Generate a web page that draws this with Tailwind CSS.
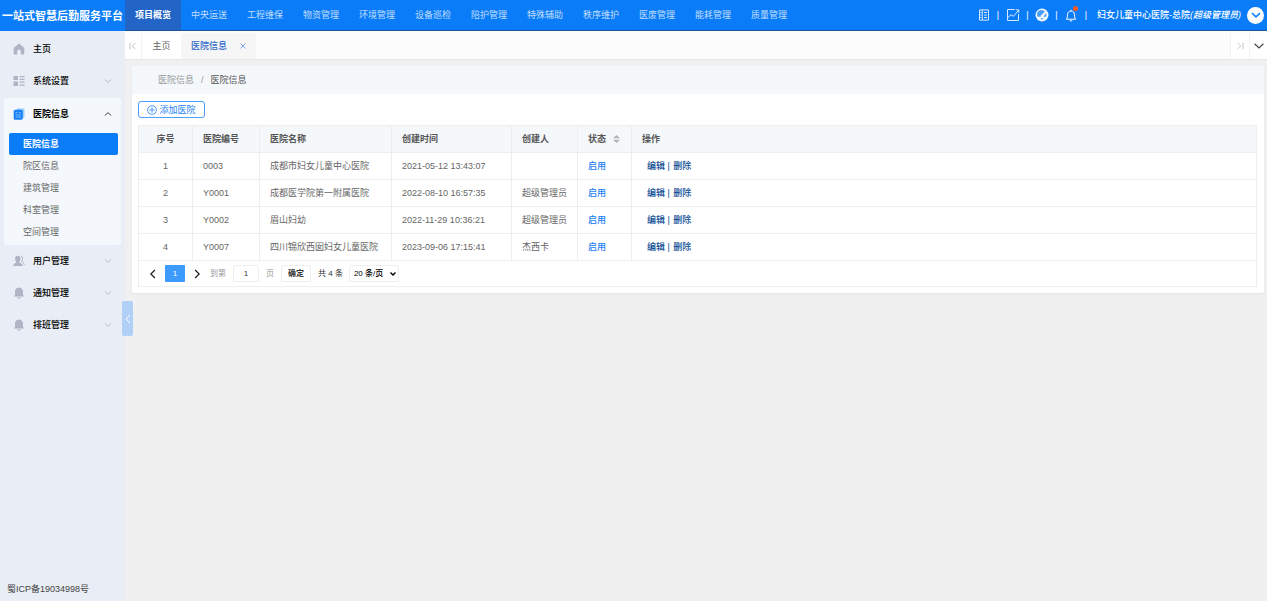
<!DOCTYPE html>
<html lang="zh-CN">

<head>
    <meta charset="UTF-8">
    <meta name="viewport" content="width=device-width, initial-scale=1.0">
    <title>一站式智慧后勤服务平台</title>
    <script src="https://cdn.jsdelivr.net/npm/@tailwindcss/browser@4"></script>
</head>

<body class="min-h-screen flex flex-col bg-[#f0f0f0] text-[9px] leading-4 text-[#666] font-['Liberation_Sans','Noto_Sans_CJK_SC',sans-serif]">
    <!-- top bar -->
    <header class="flex h-[31px] bg-[#0a7cf8] text-white whitespace-nowrap">
        <h1 class="w-[125px] shrink-0 flex items-center justify-center text-[11px] font-bold">一站式智慧后勤服务平台</h1>
        <div class="flex-1 flex justify-between border-b border-[#1d5390]">
            <nav id="nav" class="flex"></nav>
            <div class="flex items-center pr-[3px]">
                <button aria-label="文档">
                    <svg class="w-3 h-3" viewBox="0 0 12 12" fill="none" stroke="#d8eaff">
                        <path d="M1.500 .9h9v10.200h-9zM4.300 1v10M6 3.500h3M6 6h3M6 8.500h3M2.200 3.500h1.200M2.200 6h1.200M2.200 8.500h1.200" />
                    </svg>
                </button>
                <span class="w-4 text-center">|</span>
                <button aria-label="统计">
                    <svg class="w-[14px] h-[14px]" viewBox="0 0 14 14" fill="none" stroke="#d8eaff">
                        <path d="M8.500 1.500h-7v11h11V6M1.500 9.800l3.500-3 2.500 1.500 5-6M9.800 1.800h3v3" />
                    </svg>
                </button>
                <span class="w-[15px] text-center">|</span>
                <button aria-label="仪表盘">
                    <svg class="w-[14px] h-[14px]" viewBox="0 0 14 14">
                        <circle cx="7" cy="7" r="6.500" fill="#f2f8ff" />
                        <path d="M2.800 8.800a4.300 4.300 0 0 1 7-5l-3.300 3.200a1.400 1.400 0 0 0-.8 1.800z" fill="#4a9efa" />
                        <path d="M8.300 8.800 11 5.200q.8 1.800.2 3.600z" fill="#4a9efa" />
                        <path d="M5.800 10.800h2.600" stroke="#4a9efa" />
                    </svg>
                </button>
                <span class="w-[15px] text-center">|</span>
                <button aria-label="消息" class="relative">
                    <svg class="w-[14px] h-[14px]" viewBox="0 0 14 14" fill="none" stroke="#fff">
                        <path d="M7 1.800V3M2.200 11.200h9.600C10.500 10 10.600 8.500 10.500 6.800 10.300 4.300 9 3 7 3S3.700 4.300 3.500 6.800C3.400 8.500 3.500 10 2.200 11.200zM5.700 12.800h2.600" />
                    </svg>
                    <span class="absolute -top-[2px] right-0 w-[5px] h-[5px] rounded-full bg-[#ff5722]"></span>
                </button>
                <span class="w-4 mr-[3px] text-center">|</span>
                <span class="pr-[6px] font-medium">妇女儿童中心医院-总院<i>(超级管理员)</i></span>
                <button aria-label="账号菜单" class="w-[17px] h-[17px] rounded-full bg-white flex items-center justify-center">
                    <svg class="w-[10px] h-[10px]" viewBox="0 0 8 8" fill="none" stroke="#1583f8" stroke-width="1.300">
                        <path d="M.8 2.500 4 5.500l3.200-3" />
                    </svg>
                </button>
            </div>
        </div>
    </header>

    <div class="flex-1 flex">
        <!-- side menu -->
        <aside class="relative w-[125px] shrink-0 flex flex-col bg-[#e9edf5] px-1 pt-[2px] text-black font-medium">
            <a href="#" class="flex items-center h-8 pl-[9px]">
                <svg class="w-3 h-3 mr-2" viewBox="0 0 12 12" fill="#afb3c3">
                    <path d="M6 .5 11.300 5v5.500q0 1-1 1H7.800V8q0-1.500-1.800-1.500T4.200 8v3.500H1.700q-1 0-1-1V5z" />
                </svg>主页
            </a>
            <button class="flex items-center h-8 px-[9px]">
                <svg class="w-3 h-3 mr-2" viewBox="0 0 12 12" fill="#afb3c3">
                    <path d="M.5 1h4.500v4H.5zM.5 6.500h4.500v4.500H.5zM6.500 1h5v1.200h-5zM6.500 3.800h5V5h-5zM6.500 6.500h5v1.200h-5zM6.500 9.500h5v1.200h-5z" />
                </svg>系统设置
                <svg class="w-2 h-2 ml-auto" viewBox="0 0 8 8" fill="none" stroke="#b9bdc8"><path d="M.8 2.500 4 5.300l3.200-2.800" /></svg>
            </button>
            <div class="mt-px rounded-[3px] bg-[#f4f8fc] pb-[2px]">
                <button class="flex items-center w-full h-[31px] px-[9px] font-bold">
                    <svg class="w-3 h-3 mr-2" viewBox="0 0 12 12">
                        <path d="M4 .5h6.500q1 0 1 1v7q0 1.500-1.500 1.500H4z" fill="#9dccfb" />
                        <rect x=".7" y="1.700" width="9" height="10" rx="1.500" fill="#1681f6" />
                        <path d="M2.500 4.500h2M6 4.500h2M2.500 6.800h5.500M2.500 9h5.500" stroke="#7dbafb" />
                    </svg>医院信息
                    <svg class="w-2 h-2 ml-auto" viewBox="0 0 8 8" fill="none" stroke="#444"><path d="M.8 5.500 4 2.700l3.200 2.800" /></svg>
                </button>
                <div class="flex flex-col pl-[5px] pr-[3px] pt-1 text-[#666] font-normal">
                    <a href="#" class="h-[22px] flex items-center pl-[14px] rounded-[2px] bg-[#0a7cf8] text-white font-bold">医院信息</a>
                    <a href="#" class="h-[22px] flex items-center pl-[14px]">院区信息</a>
                    <a href="#" class="h-[22px] flex items-center pl-[14px]">建筑管理</a>
                    <a href="#" class="h-[22px] flex items-center pl-[14px]">科室管理</a>
                    <a href="#" class="h-[22px] flex items-center pl-[14px]">空间管理</a>
                </div>
            </div>
            <button class="flex items-center h-8 px-[9px]">
                <svg class="w-3 h-3 mr-2" viewBox="0 0 12 12" fill="#afb3c3">
                    <path d="M4.800.8q2.700 0 2.700 3 0 2-1.200 3.200.2.800 1.700 1.300 1.500.7 1.500 2.700H.3q0-2 1.500-2.700 1.500-.5 1.600-1.300Q2 5.800 2 3.800q0-3 2.800-3z" />
                    <path d="M7.800 1.200Q10 1.500 9.500 4.500 9.300 6 8.600 6.500q2.600 1 2.700 3.500" fill="none" stroke="#afb3c3" />
                </svg>用户管理
                <svg class="w-2 h-2 ml-auto" viewBox="0 0 8 8" fill="none" stroke="#b9bdc8"><path d="M.8 2.500 4 5.300l3.200-2.800" /></svg>
            </button>
            <button class="flex items-center h-8 px-[9px]">
                <svg class="w-3 h-3 mr-2" viewBox="0 0 12 12" fill="#afb3c3">
                    <path d="M6 .5q4 .3 4 4.500v3l1.200 1.500H.8L2 8V5Q2 .8 6 .5zM4 10.300h4q-.5 1.300-2 1.300t-2-1.300z" />
                </svg>通知管理
                <svg class="w-2 h-2 ml-auto" viewBox="0 0 8 8" fill="none" stroke="#b9bdc8"><path d="M.8 2.500 4 5.300l3.200-2.800" /></svg>
            </button>
            <button class="flex items-center h-8 px-[9px]">
                <svg class="w-3 h-3 mr-2" viewBox="0 0 12 12" fill="#afb3c3">
                    <path d="M6 .5q4 .3 4 4.500v3l1.200 1.500H.8L2 8V5Q2 .8 6 .5zM4 10.300h4q-.5 1.300-2 1.300t-2-1.300z" />
                </svg>排班管理
                <svg class="w-2 h-2 ml-auto" viewBox="0 0 8 8" fill="none" stroke="#b9bdc8"><path d="M.8 2.500 4 5.300l3.200-2.800" /></svg>
            </button>
            <p class="mt-auto pl-[3px] pb-1 text-[#444] font-normal">蜀ICP备19034998号</p>
            <!-- collapse handle -->
            <button aria-label="收起菜单" class="absolute left-[122px] top-[270px] w-[11px] h-[35px] rounded-[2px] bg-[#b0d1f5] flex items-center justify-center">
                <svg class="w-2 h-[10px]" viewBox="0 0 8 10" fill="none" stroke="#fff"><path d="M5.800 1 2.200 5l3.600 4" /></svg>
            </button>
        </aside>

        <main class="flex-1 min-w-0">
            <!-- tabs -->
            <div class="flex h-[29px] pt-[2px] bg-[#fcfcfc] border-b border-[#e6e6e6]">
                <button aria-label="向左" class="w-[17px] flex items-center justify-center bg-white border-r border-[#f3f3f3]">
                    <svg class="w-2 h-2" viewBox="0 0 8 8" fill="none" stroke="#c4c4c4"><path d="M1 .8v6.400M6.500.8 3.300 4l3.200 3.200" /></svg>
                </button>
                <a href="#" class="w-[39px] flex items-center justify-center bg-white">主页</a>
                <div class="flex items-center pl-[10px] pr-2 gap-3 bg-[#f6f6f6] text-[#2a68c8]">
                    <a href="#" class="font-medium">医院信息</a>
                    <button aria-label="关闭" class="pr-px">
                        <svg class="w-2 h-2" viewBox="0 0 8 8" stroke="#7fa9e6"><path d="m1.500 1.500 5 5M6.500 1.500l-5 5" /></svg>
                    </button>
                </div>
                <button aria-label="向右" class="ml-auto w-5 flex items-center justify-center bg-white border-x border-[#f3f3f3]">
                    <svg class="w-2 h-2" viewBox="0 0 8 8" fill="none" stroke="#c4c4c4"><path d="M7 .8v6.400M1.500.8 4.700 4 1.500 7.200" /></svg>
                </button>
                <button aria-label="更多" class="w-[17px] flex items-center justify-center bg-white">
                    <svg class="w-[10px] h-[10px]" viewBox="0 0 10 10" fill="none" stroke="#444" stroke-width="1.200"><path d="M.6 2.800 5 7l4.400-4.200" /></svg>
                </button>
            </div>

            <section class="mt-[6px] ml-[7px] mr-[3px] bg-white rounded-[2px] shadow-xs">
                <div class="flex items-center h-[28px] pl-[26px] gap-[7px] bg-[#f4f8fb] text-[#999]">
                    <a href="#">医院信息</a><span>/</span><span class="text-[#555]">医院信息</span>
                </div>
                <div class="pl-[6px] pr-[7px] pt-[7px] pb-[6px]">
                    <button class="flex items-center justify-center gap-[2px] w-[67px] h-[17px] mb-[7px] border border-[#4b9ffa] rounded-[3px] text-[#1b80f5]">
                        <svg class="w-[10px] h-[10px]" viewBox="0 0 10 10" fill="none" stroke="#3a91f7" stroke-width=".9"><circle cx="5" cy="5" r="4.400" /><path d="M5 2.400v5.200M2.400 5h5.200" /></svg>添加医院
                    </button>
                    <table class="w-full table-fixed border-collapse text-left whitespace-nowrap">
                        <thead>
                            <tr class="h-[27px] bg-[#f4f8fb] text-[#555]">
                                <th class="w-[54px] border border-[#eee] text-center">序号</th>
                                <th class="w-[67px] border border-[#eee] pl-[10px]">医院编号</th>
                                <th class="w-[132px] border border-[#eee] pl-[10px]">医院名称</th>
                                <th class="w-[120px] border border-[#eee] pl-[10px]">创建时间</th>
                                <th class="w-[66px] border border-[#eee] pl-[10px]">创建人</th>
                                <th class="w-[54px] border border-[#eee] pl-[10px]">
                                    <button class="flex items-center gap-[7px] font-bold">状态
                                        <svg class="w-[7px] h-2" viewBox="0 0 7 8" fill="#b2b2b2"><path d="M3.500 0 7 3.300H0zM3.500 8 7 4.700H0z" /></svg>
                                    </button>
                                </th>
                                <th class="border border-[#eee] pl-[10px]">操作</th>
                            </tr>
                        </thead>
                        <tbody id="rows"></tbody>
                    </table>
                    <div class="flex items-center h-[26px] pl-[9px] border border-t-0 border-[#eee] text-[8px] text-[#333]">
                        <button aria-label="上一页"><svg class="w-[10px] h-[10px]" viewBox="0 0 8 8" fill="none" stroke="#222"><path d="M5.500.8 2.300 4l3.200 3.200" /></svg></button>
                        <button class="w-5 h-[17px] ml-[7px] rounded-[1px] bg-[#3c9bfd] text-white">1</button>
                        <button aria-label="下一页" class="ml-[7px]"><svg class="w-[10px] h-[10px]" viewBox="0 0 8 8" fill="none" stroke="#222"><path d="M2.500.8 5.700 4 2.500 7.200" /></svg></button>
                        <label for="page" class="ml-2 text-[#999]">到第</label>
                        <input id="page" type="text" value="1" class="w-[26px] h-[17px] ml-[7px] border border-[#eee] rounded-[2px] text-center">
                        <span class="ml-[7px] text-[#999]">页</span>
                        <button class="w-[30px] h-[17px] ml-[7px] border border-[#eee] rounded-[2px] font-bold">确定</button>
                        <span class="ml-[7px]">共 4 条</span>
                        <div class="relative ml-[6px]">
                            <select aria-label="每页条数" class="block appearance-none h-[17px] w-[50px] pl-1 border border-[#eee] rounded-[2px] font-medium text-black">
                                <option>20 条/页</option>
                            </select>
                            <svg class="absolute right-[3px] top-[6px] w-[6px] h-[6px] pointer-events-none" viewBox="0 0 6 6" fill="none" stroke="#000" stroke-width="1.400"><path d="M.5 1.500 3 4l2.500-2.500" /></svg>
                        </div>
                    </div>
                </div>
            </section>
        </main>
    </div>
</body>

</html>
<script>
    let menus = ["项目概览", "中央运送", "工程维保", "物资管理", "环境管理", "设备巡检", "陪护管理", "特殊辅助", "秩序维护", "医废管理", "能耗管理", "质量管理"];
    let nav = document.getElementById("nav");
    menus.forEach((el, i) => {
        let a = document.createElement("a");
        a.href = "#";
        a.innerText = el;
        a.className = i == 0 ? "w-14 flex items-center justify-center bg-[#2265c6] font-bold" : "w-14 flex items-center justify-center text-white/75";
        nav.append(a);
    });

    let hospitals = [
        ["0003", "成都市妇女儿童中心医院", "2021-05-12 13:43:07", ""],
        ["Y0001", "成都医学院第一附属医院", "2022-08-10 16:57:35", "超级管理员"],
        ["Y0002", "眉山妇幼", "2022-11-29 10:36:21", "超级管理员"],
        ["Y0007", "四川锦欣西囡妇女儿童医院", "2023-09-06 17:15:41", "杰西卡"],
    ];
    let rows = document.getElementById("rows");
    hospitals.forEach((el, i) => {
        let tr = document.createElement("tr");
        tr.className = "h-[27px]";
        tr.innerHTML = `<td class="border border-[#eee] text-center">${i + 1}</td>`
            + el.map((v) => `<td class="border border-[#eee] pl-[10px]">${v}</td>`).join("")
            + `<td class="border border-[#eee] pl-[10px]"><button class="text-[#1b80f5] font-medium">启用</button></td>
            <td class="border border-[#eee] pl-[15px] text-[#0b4a94] font-medium"><button>编辑</button> | <button class="ml-px">删除</button></td>`;
        rows.append(tr);
    });
</script>
